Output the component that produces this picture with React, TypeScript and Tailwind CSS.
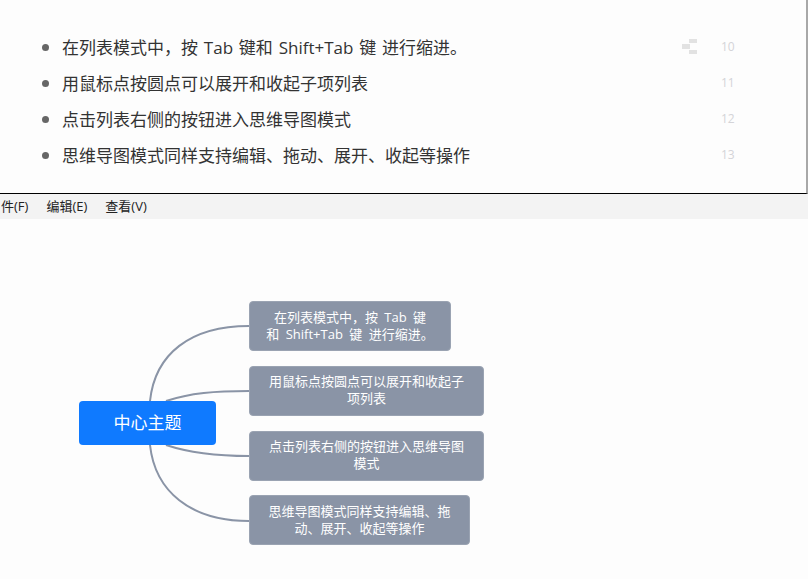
const FONT = "font-['Open_Sans','Noto_Sans_CJK_SC',sans-serif]";

const listItems = [
  { text: '在列表模式中，按 Tab 键和 Shift+Tab 键 进行缩进。', line: 10 },
  { text: '用鼠标点按圆点可以展开和收起子项列表', line: 11 },
  { text: '点击列表右侧的按钮进入思维导图模式', line: 12 },
  { text: '思维导图模式同样支持编辑、拖动、展开、收起等操作', line: 13 },
];

const nodes = [
  { top: 301, width: 202, pad: 'pb-0', lines: ['在列表模式中，按 Tab 键', '和 Shift+Tab 键 进行缩进。'] },
  { top: 366, width: 235, pad: 'pb-[2px]', lines: ['用鼠标点按圆点可以展开和收起子', '项列表'] },
  { top: 431, width: 235, pad: 'pb-[2px]', lines: ['点击列表右侧的按钮进入思维导图', '模式'] },
  { top: 495, width: 221, pad: 'pb-0', lines: ['思维导图模式同样支持编辑、拖', '动、展开、收起等操作'] },
];

const MapIcon = () => (
  <svg width="16" height="16" viewBox="0 0 16 16" className="block" fill="#e2e2e2">
    <rect x="7" y="0" width="8" height="4" />
    <rect x="0" y="5" width="8" height="5" />
    <rect x="7" y="11" width="8" height="4" />
  </svg>
);

export default function App() {
  return (
    <div className={`flex h-[579px] w-[808px] flex-col overflow-hidden bg-[#fdfdfd] ${FONT}`}>
      {/* list editor */}
      <div className="h-[194px] shrink-0 border-r-2 border-b border-r-[#a8a8a8] border-b-black bg-[#fdfdfd] pt-[29px]">
        <ul>
          {listItems.map((item, i) => (
            <li key={item.line} className="flex h-9 items-center">
              <span className="ml-[42px] h-[7px] w-[7px] rounded-full bg-[#666666]" />
              <span className="mt-[2px] ml-[13px] w-[620px] text-[17px] whitespace-pre text-[#333333] [word-spacing:1.4px]">
                {item.text}
              </span>
              <span className="flex w-[16px] justify-center">{i === 0 && <MapIcon />}</span>
              <span className="ml-[23px] text-xs text-[#d4d4d8]">{item.line}</span>
            </li>
          ))}
        </ul>
      </div>

      {/* menu bar */}
      <div className="flex h-[25px] shrink-0 items-center gap-[18px] bg-[#f3f3f3] pt-[1px] text-[13px] text-[#222222]">
        <span className="ml-[1px]">件(F)</span>
        <span>编辑(E)</span>
        <span>查看(V)</span>
      </div>

      {/* mind map canvas */}
      <div className="relative flex-1">
        <svg className="absolute top-0 left-0" width="808" height="360" fill="none" stroke="#8a94a6" strokeWidth="2">
          <path d="M150 182 C155 135 190 107 249 107" />
          <path d="M166 182 C190 174 215 172 249 172" />
          <path d="M166 226 C190 234 215 237 249 237" />
          <path d="M150 226 C155 272 190 302 249 302" />
        </svg>
        <div className="absolute top-[182px] left-[79px] flex h-[44px] w-[137px] items-center justify-center rounded-[4px] bg-[#0f7aff] text-[17px] text-white">
          中心主题
        </div>
        {nodes.map(node => (
          <div
            key={node.top}
            className={`absolute left-[249px] flex h-[50px] flex-col items-center justify-center rounded-[4px] border border-[#9aa3b2] bg-[#8a94a6] text-[13px] leading-[17px] whitespace-pre text-white [word-spacing:3px] ${node.pad}`}
            style={{ top: node.top - 219, width: node.width }}
          >
            {node.lines.map(line => (
              <span key={line}>{line}</span>
            ))}
          </div>
        ))}
      </div>
    </div>
  );
}
